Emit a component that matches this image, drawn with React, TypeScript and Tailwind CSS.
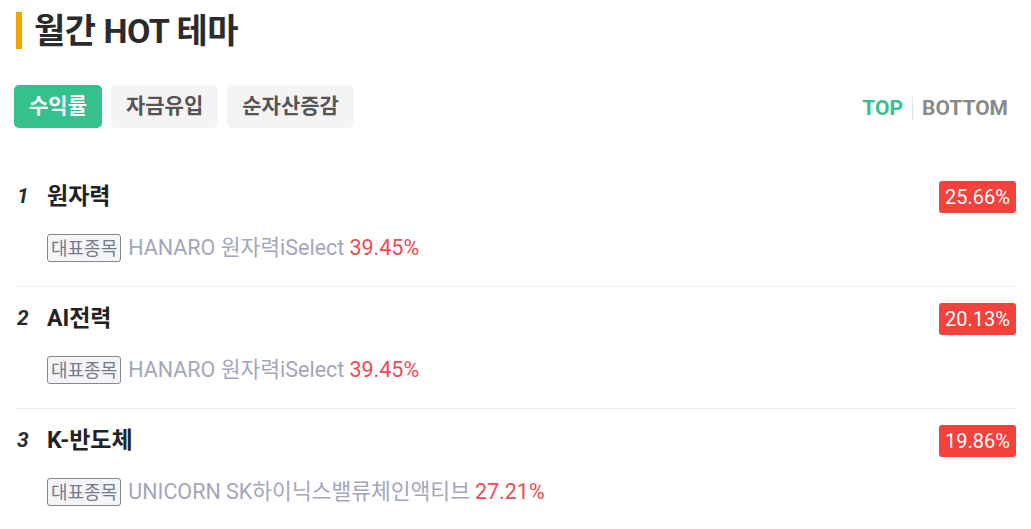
import React from "react";

const font = { fontFamily: "Roboto, 'Noto Sans CJK KR', sans-serif" };

const rows = [
  { rank: "1", name: "원자력", pct: "25.66%", stock: "HANARO 원자력iSelect", sp: "39.45%" },
  { rank: "2", name: "AI전력", pct: "20.13%", stock: "HANARO 원자력iSelect", sp: "39.45%" },
  { rank: "3", name: "K-반도체", pct: "19.86%", stock: "UNICORN SK하이닉스밸류체인액티브", sp: "27.21%" },
];

export default function App() {
  return (
    <div className="w-[1031px] h-[529px] bg-white overflow-hidden" style={font}>
      <div className="pl-[16px] pr-[15px] pt-[12px]">
        <div className="flex items-center gap-[12px] h-[37px]">
          <div className="w-[6px] h-[37px] bg-[#f8a300]" />
          <h1 className="text-[34px] font-bold text-[#2b2b2b] leading-none tracking-[-0.5px]">월간 HOT 테마</h1>
        </div>
        <div className="mt-[36px] flex items-center justify-between">
          <div className="flex gap-[9px] -ml-[2px]">
            <button className="h-[43px] px-[15px] rounded-[5px] bg-[#35c08e] text-white text-[21px] font-bold">수익률</button>
            <button className="h-[43px] px-[15px] rounded-[5px] bg-[#f4f4f5] text-[#555] text-[21px] font-bold">자금유입</button>
            <button className="h-[43px] px-[15px] rounded-[5px] bg-[#f4f4f5] text-[#555] text-[21px] font-bold">순자산증감</button>
          </div>
          <div className="flex items-center text-[21px] font-bold mr-[8px] mt-[5px]">
            <span className="text-[#35c08e]">TOP</span>
            <span className="w-px h-[24px] bg-[#e3e3e3] mx-[9px]" />
            <span className="text-[#8a8a8a]">BOTTOM</span>
          </div>
        </div>
        <div className="mt-[37px]">
          {rows.map((r, i) => (
            <div key={i} className={`${i < rows.length - 1 ? "border-b border-[#ececec]" : ""} -ml-[1px] pt-[16px] pb-[24px]`}>
              <div className="flex items-center justify-between h-[32px]">
                <div className="flex items-center">
                  <span className="w-[32px] pl-[2px] text-[21px] font-bold italic text-[#2b2b2b]">{r.rank}</span>
                  <span className="text-[23px] font-bold text-[#222]">{r.name}</span>
                </div>
                <span className="h-[32px] px-[6px] rounded-[3px] bg-[#f5413b] text-white text-[20px] flex items-center">{r.pct}</span>
              </div>
              <div className="mt-[21px] ml-[32px] flex items-center text-[21.5px] h-[28px]">
                <span className="h-[28px] px-[3px] border border-[#888] rounded-[3px] bg-[#f4f5f8] text-[#777a88] text-[18px] flex items-center mr-[7px]">대표종목</span>
                <span className="text-[#a4a6bc]">{r.stock}</span>
                <span className="text-[#f04a55] ml-[5px]">{r.sp}</span>
              </div>
            </div>
          ))}
        </div>
      </div>
    </div>
  );
}
